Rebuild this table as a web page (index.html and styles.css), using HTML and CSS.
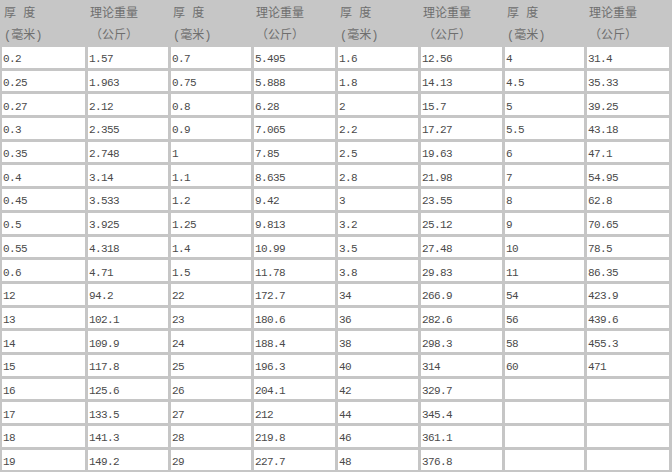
FILE: index.html
```html
<!DOCTYPE html>
<html lang="zh">
<head>
<meta charset="utf-8">
<title>钢板理论重量表</title>
<link rel="stylesheet" href="styles.css">
</head>
<body>
<div class="sheet">
  <div class="hd"><span>厚&nbsp;度</span><span>(毫米)</span></div>
  <div class="hd"><span>理论重量</span><span>（公斤）</span></div>
  <div class="hd"><span>厚&nbsp;度</span><span>(毫米)</span></div>
  <div class="hd"><span>理论重量</span><span>（公斤）</span></div>
  <div class="hd"><span>厚&nbsp;度</span><span>(毫米)</span></div>
  <div class="hd"><span>理论重量</span><span>（公斤）</span></div>
  <div class="hd"><span>厚&nbsp;度</span><span>(毫米)</span></div>
  <div class="hd"><span>理论重量</span><span>（公斤）</span></div>

  <div class="c">0.2</div><div class="c">1.57</div><div class="c">0.7</div><div class="c">5.495</div><div class="c">1.6</div><div class="c">12.56</div><div class="c">4</div><div class="c">31.4</div>
  <div class="c">0.25</div><div class="c">1.963</div><div class="c">0.75</div><div class="c">5.888</div><div class="c">1.8</div><div class="c">14.13</div><div class="c">4.5</div><div class="c">35.33</div>
  <div class="c">0.27</div><div class="c">2.12</div><div class="c">0.8</div><div class="c">6.28</div><div class="c">2</div><div class="c">15.7</div><div class="c">5</div><div class="c">39.25</div>
  <div class="c">0.3</div><div class="c">2.355</div><div class="c">0.9</div><div class="c">7.065</div><div class="c">2.2</div><div class="c">17.27</div><div class="c">5.5</div><div class="c">43.18</div>
  <div class="c">0.35</div><div class="c">2.748</div><div class="c">1</div><div class="c">7.85</div><div class="c">2.5</div><div class="c">19.63</div><div class="c">6</div><div class="c">47.1</div>
  <div class="c">0.4</div><div class="c">3.14</div><div class="c">1.1</div><div class="c">8.635</div><div class="c">2.8</div><div class="c">21.98</div><div class="c">7</div><div class="c">54.95</div>
  <div class="c">0.45</div><div class="c">3.533</div><div class="c">1.2</div><div class="c">9.42</div><div class="c">3</div><div class="c">23.55</div><div class="c">8</div><div class="c">62.8</div>
  <div class="c">0.5</div><div class="c">3.925</div><div class="c">1.25</div><div class="c">9.813</div><div class="c">3.2</div><div class="c">25.12</div><div class="c">9</div><div class="c">70.65</div>
  <div class="c">0.55</div><div class="c">4.318</div><div class="c">1.4</div><div class="c">10.99</div><div class="c">3.5</div><div class="c">27.48</div><div class="c">10</div><div class="c">78.5</div>
  <div class="c">0.6</div><div class="c">4.71</div><div class="c">1.5</div><div class="c">11.78</div><div class="c">3.8</div><div class="c">29.83</div><div class="c">11</div><div class="c">86.35</div>
  <div class="c">12</div><div class="c">94.2</div><div class="c">22</div><div class="c">172.7</div><div class="c">34</div><div class="c">266.9</div><div class="c">54</div><div class="c">423.9</div>
  <div class="c">13</div><div class="c">102.1</div><div class="c">23</div><div class="c">180.6</div><div class="c">36</div><div class="c">282.6</div><div class="c">56</div><div class="c">439.6</div>
  <div class="c">14</div><div class="c">109.9</div><div class="c">24</div><div class="c">188.4</div><div class="c">38</div><div class="c">298.3</div><div class="c">58</div><div class="c">455.3</div>
  <div class="c">15</div><div class="c">117.8</div><div class="c">25</div><div class="c">196.3</div><div class="c">40</div><div class="c">314</div><div class="c">60</div><div class="c">471</div>
  <div class="c">16</div><div class="c">125.6</div><div class="c">26</div><div class="c">204.1</div><div class="c">42</div><div class="c">329.7</div><div class="c"></div><div class="c"></div>
  <div class="c">17</div><div class="c">133.5</div><div class="c">27</div><div class="c">212</div><div class="c">44</div><div class="c">345.4</div><div class="c"></div><div class="c"></div>
  <div class="c">18</div><div class="c">141.3</div><div class="c">28</div><div class="c">219.8</div><div class="c">46</div><div class="c">361.1</div><div class="c"></div><div class="c"></div>
  <div class="c">19</div><div class="c">149.2</div><div class="c">29</div><div class="c">227.7</div><div class="c">48</div><div class="c">376.8</div><div class="c"></div><div class="c"></div>
</div>
</body>
</html>
```

FILE: styles.css
```css
html, body {
  margin: 0;
  padding: 0;
  background: #c6c6c6;
}

.sheet {
  width: 672px;
  height: 472px;
  box-sizing: border-box;
  padding: 0 3px 0 2px;
  display: grid;
  grid-template-columns: 83px 80px 80px 81px 80px 81px 79px 82px;
  grid-template-rows: 44px repeat(18, 20.7px);
  column-gap: 3px;
  row-gap: 3px;
  background: #c6c6c6;
  font-family: "Liberation Mono", "Noto Sans CJK SC", monospace;
  overflow: hidden;
}

.hd {
  display: flex;
  flex-direction: column;
  padding: 3px 0 0 2px;
  font-size: 12px;
  line-height: 22px;
  color: #6e6e6e;
  white-space: nowrap;
}

.c {
  background: #ffffff;
  display: flex;
  align-items: center;
  padding: 4px 0 0 1px;
  box-sizing: border-box;
  font-size: 11px;
  letter-spacing: -0.6px;
  color: #4a4a4a;
  white-space: nowrap;
}
```
